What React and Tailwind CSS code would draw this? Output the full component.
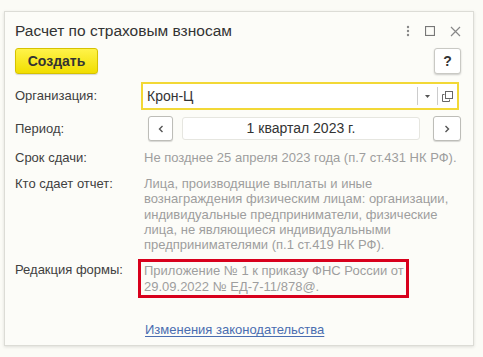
import React from "react";

const font = { fontFamily: '"Liberation Sans", Arial, sans-serif' };

function Row({ label, children, className = "" }) {
  return (
    <div className={"flex " + className}>
      <div className="w-[126px] shrink-0 text-[#404040]">{label}</div>
      <div className="flex-1 min-w-0">{children}</div>
    </div>
  );
}

export default function App() {
  return (
    <div className="w-[483px] h-[357px] bg-[#fbfbf6] pt-[11px] pl-[4px]" style={font}>
      <div className="w-[470px] h-[335px] border border-[#dcdcd6] bg-[#fcfcf8] shadow-[0_1px_3px_rgba(0,0,0,0.12)] px-[10px] text-[13px] whitespace-nowrap">
        <div className="flex items-center h-[36px] pt-[2px]">
          <div className="flex-1 text-[15.5px] text-[#333]">Расчет по страховым взносам</div>
          <div className="flex items-center gap-[15px] pr-[2px] text-[#888]">
            <svg width="4" height="12" viewBox="0 0 4 12"><circle cx="2" cy="2" r="1.2" fill="#888" /><circle cx="2" cy="6" r="1.2" fill="#888" /><circle cx="2" cy="10" r="1.2" fill="#888" /></svg>
            <svg width="10" height="10" viewBox="0 0 10 10"><rect x="0.5" y="0.5" width="9" height="9" fill="none" stroke="#777" strokeWidth="1.2" /></svg>
            <svg width="11" height="11" viewBox="0 0 11 11"><path d="M1 1L10 10M10 1L1 10" stroke="#888" strokeWidth="1.2" /></svg>
          </div>
        </div>
        <div className="flex items-center justify-between">
          <button className="w-[83px] h-[26px] rounded-[3px] border border-[#d6c200] bg-[linear-gradient(#fff34a,#f1de00)] text-[#333] font-bold text-[14px] shadow-[0_1px_1px_rgba(0,0,0,0.15)]">
            Создать
          </button>
          <button className="w-[27px] h-[26px] mr-[2px] rounded-[3px] border border-[#c9c9c4] bg-white text-[#333] font-bold text-[14px] shadow-[0_1px_2px_rgba(0,0,0,0.2)]">
            ?
          </button>
        </div>
        <Row label="Организация:" className="items-center mt-[8px]">
          <div className="w-[318px] h-[28px] border-2 border-[#f2d836] bg-white flex items-center">
            <div className="flex-1 pl-[4px] text-[#333] text-[14px]">Крон-Ц</div>
            <div className="w-px h-[18px] bg-[#ccc]" />
            <div className="w-[19px] flex justify-center">
              <svg width="5" height="3" viewBox="0 0 5 3"><path d="M0 0H5L2.5 3Z" fill="#555" /></svg>
            </div>
            <div className="w-px h-[18px] bg-[#ccc]" />
            <div className="w-[19px] flex justify-center">
              <svg width="11" height="11" viewBox="0 0 11 11" fill="none" stroke="#666" strokeWidth="1"><rect x="3.5" y="0.5" width="7" height="7" /><path d="M2.5 3.5H0.5V10.5H7.5V8.5" /></svg>
            </div>
          </div>
        </Row>
        <Row label="Период:" className="items-center mt-[6px]">
          <div className="flex items-center pl-[7px] pr-[2px]">
            <button className="w-[25px] h-[25px] rounded-[3px] border border-[#bdbdb8] bg-white flex items-center justify-center shadow-[0_1px_1px_rgba(0,0,0,0.15)]">
              <svg width="6" height="8" viewBox="0 0 6 8"><path d="M4.5 1L1.5 4L4.5 7" fill="none" stroke="#555" strokeWidth="1.4" /></svg>
            </button>
            <div className="ml-[9px] w-[238px] h-[23px] rounded-[3px] border border-[#e6e6e0] bg-white flex items-center justify-center text-[#333] text-[14px]">
              1 квартал 2023 г.
            </div>
            <button className="ml-auto w-[28px] h-[25px] rounded-[3px] border border-[#bdbdb8] bg-white flex items-center justify-center shadow-[0_1px_1px_rgba(0,0,0,0.15)]">
              <svg width="6" height="8" viewBox="0 0 6 8"><path d="M1.5 1L4.5 4L1.5 7" fill="none" stroke="#555" strokeWidth="1.4" /></svg>
            </button>
          </div>
        </Row>
        <Row label="Срок сдачи:" className="mt-[9px] leading-[16px]">
          <div className="pl-[3px] text-[#9e9e9e]">Не позднее 25 апреля 2023 года (п.7 ст.431 НК РФ).</div>
        </Row>
        <Row label="Кто сдает отчет:" className="mt-[10px] leading-[15.3px]">
          <div className="pl-[3px] text-[#9e9e9e]">
            Лица, производящие выплаты и иные<br />
            вознаграждения физическим лицам: организации,<br />
            индивидуальные предприниматели, физические<br />
            лица, не являющиеся индивидуальными<br />
            предпринимателями (п.1 ст.419 НК РФ).
          </div>
        </Row>
        <Row label="Редакция формы:" className="mt-[10px] leading-[15.5px]">
          <div className="-ml-[3px] -mt-[3px] w-[271px] border-[3px] border-[#d8001c] pl-[3px] pt-[1px] pb-[1px] text-[#9e9e9e]">
            Приложение № 1 к приказу ФНС России от<br />
            29.09.2022 № ЕД-7-11/878@.
          </div>
        </Row>
        <div className="mt-[22px] pl-[130px]">
          <span className="text-[#4a6db0] underline underline-offset-2">Изменения законодательства</span>
        </div>
      </div>
    </div>
  );
}
